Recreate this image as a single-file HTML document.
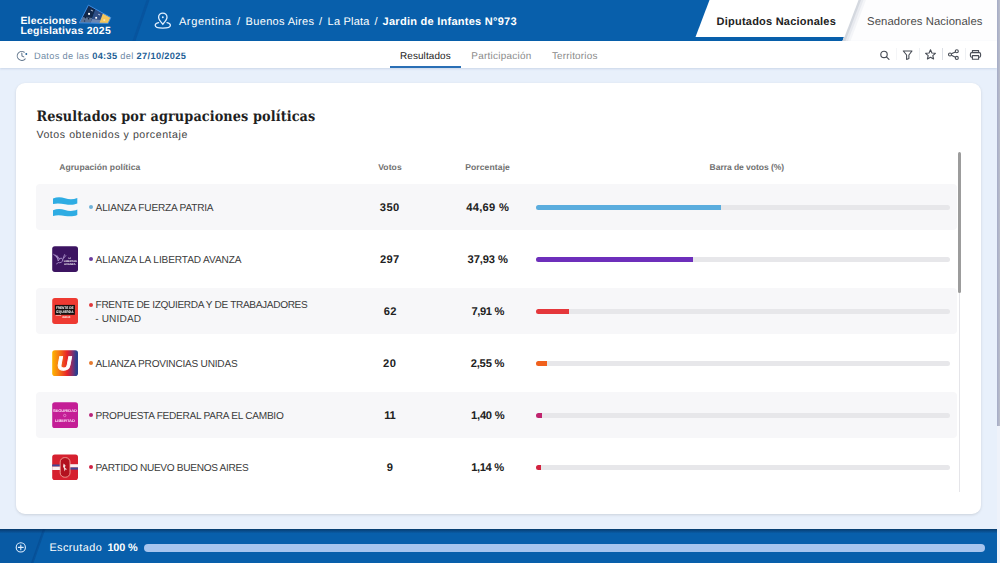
<!DOCTYPE html>
<html lang="es">
<head>
<meta charset="utf-8">
<title>Elecciones Legislativas 2025</title>
<style>
*{box-sizing:border-box;margin:0;padding:0}
html,body{width:1000px;height:563px;overflow:hidden}
body{background:#e8f0fb;font-family:"Liberation Sans",sans-serif;position:relative;color:#333;text-rendering:geometricPrecision}
.abs{position:absolute;white-space:nowrap;line-height:1}
#dt b{color:#1f5f96}
#hdr{position:absolute;left:0;top:0;width:997px;height:41px;background:#085fab}
#sub{position:absolute;left:0;top:41px;width:997px;height:27px;background:#fff;box-shadow:0 1px 2px rgba(70,100,150,.18)}
#tabA{position:absolute;left:0;top:0;width:1000px;height:45px}
#card{position:absolute;left:16px;top:83px;width:965px;height:431px;background:#fff;border-radius:9px;box-shadow:0 1px 3px rgba(0,0,0,.13)}
#foot{position:absolute;left:0;top:529px;width:997px;height:34px;background:linear-gradient(180deg,#083c6c 0,#094c8b 2px,#085fab 4.5px)}
.row{position:absolute;left:36px;width:921px;height:46px;background:#f7f7f9;border-radius:4px}
.logo{position:absolute;left:52px;width:26px;height:26px;will-change:transform}
.dot{position:absolute;left:88.75px;width:4.5px;height:4.5px;border-radius:50%}
.bar{position:absolute;left:536px;width:414px;height:5px;background:#e7e7ea;border-radius:2.5px;overflow:hidden}
.bar i{display:block;height:5px}
.ico{position:absolute;overflow:visible}
.sep{position:absolute;top:48px;width:1px;height:12px;background:#e3e5ea}
</style>
</head>
<body>
<div id="hdr"></div>
<svg id="tabA" viewBox="0 0 1000 45">
  <defs>
    <linearGradient id="sl" x1="0" x2="1"><stop offset="0" stop-color="#0a5aa6"/><stop offset="1" stop-color="#0a5aa6"/></linearGradient>
  </defs>
  <polygon points="0,0 147,0 133,41 0,41" fill="#075ba6"/>
  <polygon points="146.5,0 149.5,0 135.5,41 132.5,41" fill="#07549e"/>
  <polygon points="859,0 997,0 997,41 843,41" fill="#fdfdfe"/>
  <polygon points="858,0 866,0 850.5,41 842.5,41" fill="#f4f5f8"/>
  <polygon points="858,0 863.5,0 848,41 842.5,41" fill="#e8eaef"/>
  <polygon points="858,0 861,0 845.5,41 842.5,41" fill="#d4d8df"/>
  <polygon points="709.5,0 858.5,0 844.5,37 695.5,37" fill="#fff"/>
  <rect x="846" y="41" width="151" height="1" fill="#eceef2"/>
</svg>
<!-- ballot logo -->
<svg class="ico" style="left:76px;top:2px" width="40" height="26" viewBox="76 2 40 26">
  <polygon points="88.4,5.1 95.6,9.1 90.4,23.1 79.3,22.9" fill="#12284b"/>
  <polygon points="82.6,17 92.4,18 90.4,23.1 79.3,22.9" fill="#5b7396"/>
  <circle cx="85.4" cy="17.6" r=".8" fill="#0d1c36"/><circle cx="88.6" cy="18.8" r=".8" fill="#0d1c36"/><circle cx="84.6" cy="21" r=".7" fill="#22375c"/>
  <polygon points="95.6,9.1 103,13.3 99.2,23.2 90.4,23.1" fill="#2f4d84"/>
  <polygon points="92.2,19 100.4,20 99.2,23.2 90.4,23.1" fill="#6d88b3"/>
  <polygon points="103,13.3 110.8,17.6 108.1,23.4 99.2,23.2" fill="#f3c65c"/>
  <polygon points="88.4,5.1 110.8,17.6 108.1,23.4 79.3,22.9" fill="none" stroke="#3d8ce2" stroke-width="1" stroke-linejoin="round"/>
  <rect x="88.1" y="12.9" width="1.9" height="1.9" fill="#fff"/>
  <rect x="95.3" y="16.9" width="1.8" height="1.8" fill="#fff"/>
  <rect x="91" y="9.6" width="2.4" height=".7" fill="#c9d3e6" transform="rotate(29 91 9.6)"/>
  <rect x="98.4" y="13.8" width="2.2" height=".7" fill="#c9d3e6" transform="rotate(29 98.4 13.8)"/>
  <rect x="103.4" y="19.2" width="1.8" height="1.8" fill="#fbe3a6"/>
</svg>
<!-- location icon -->
<svg class="ico" style="left:153px;top:11px" width="20" height="19" viewBox="0 0 20 19" fill="none" stroke="#e3f0ff" stroke-width="1.3" stroke-linecap="round">
  <path d="M9.8 13.2 C7.4 10.6 5.6 8.6 5.6 6.3 A4.2 4.2 0 0 1 14 6.3 C14 8.6 12.2 10.6 9.8 13.2 Z"/>
  <circle cx="9.8" cy="6.3" r=".95" fill="#e3f0ff" stroke="none"/>
  <path d="M5.6 11.7 C3.4 12.2 2.2 13.2 2.2 14.3 C2.2 16 5.6 17.2 9.8 17.2 C14 17.2 17.4 16 17.4 14.3 C17.4 13.2 16.2 12.2 14 11.7"/>
</svg>

<div id="sub"></div>
<!-- clock icon -->
<svg class="ico" style="left:16px;top:50px" width="12" height="12" viewBox="0 0 12 12" fill="none" stroke="#64788e" stroke-width="1.05" stroke-linecap="round" stroke-linejoin="round">
  <path d="M8.3 2.2 A4.5 4.5 0 1 0 9.2 8.8"/>
  <path d="M5.8 3.1 L6 6 L7.8 6.9"/>
  <circle cx="10.3" cy="4" r=".95" fill="#1f5f96" stroke="none"/>
</svg>
<div style="position:absolute;left:390px;top:66px;width:71px;height:2px;background:#2a6fb5"></div>
<!-- toolbar icons -->
<svg class="ico" style="left:879px;top:49px" width="12" height="12" viewBox="0 0 12 12" fill="none" stroke="#474c55" stroke-width="1.15" stroke-linecap="round">
  <circle cx="5" cy="5.4" r="3.2"/><path d="M7.4 7.8 L10 10.3"/>
</svg>
<svg class="ico" style="left:902px;top:49px" width="12" height="12" viewBox="0 0 12 12" fill="none" stroke="#474c55" stroke-width="1.1" stroke-linejoin="round">
  <path d="M1.3 2 H10 L6.9 6 V9.4 L4.6 10.4 V6 Z"/>
</svg>
<svg class="ico" style="left:924px;top:48px" width="13" height="13" viewBox="0 0 13 13" fill="none" stroke="#474c55" stroke-width="1.1" stroke-linejoin="round">
  <path d="M6.5 1.8 L7.9 5 L11.4 5.3 L8.8 7.6 L9.6 11 L6.5 9.2 L3.4 11 L4.2 7.6 L1.6 5.3 L5.1 5 Z"/>
</svg>
<svg class="ico" style="left:947px;top:48px" width="13" height="13" viewBox="0 0 13 13" fill="none" stroke="#474c55" stroke-width="1.1">
  <circle cx="3" cy="6.5" r="1.5"/><circle cx="9.8" cy="3.3" r="1.5"/><circle cx="9.8" cy="9.9" r="1.5"/>
  <path d="M4.4 5.8 L8.4 3.9 M4.4 7.2 L8.4 9.2"/>
</svg>
<svg class="ico" style="left:969px;top:49px" width="13" height="12" viewBox="0 0 13 12" fill="none" stroke="#474c55" stroke-width="1.1" stroke-linejoin="round">
  <path d="M3.4 3.6 V1.6 H9.6 V3.6"/>
  <rect x="1.4" y="3.6" width="10.2" height="4.6" rx="1.4"/>
  <rect x="3.4" y="6.6" width="6.2" height="3.6" fill="#fff"/>
</svg>
<div class="sep" style="left:896px;background:#f4f5f7"></div>
<div class="sep" style="left:919px;background:#eef0f3"></div>
<div class="sep" style="left:941.5px;background:#dcdfe5"></div>
<div class="sep" style="left:964.5px;background:#eef0f3"></div>

<div id="card"></div>
<div class="row" style="top:184px"></div>
<div class="row" style="top:288px"></div>
<div class="row" style="top:392px"></div>

<svg class="logo" style="top:194px" viewBox="0 0 26 26">
  <path d="M1 4.5 C5 2.7 9 2.9 13 4.2 S21 5.7 25.3 3.9 L25.3 9.6 C21 11.4 17 10.9 13 10.2 S5 9 1 10 Z" fill="#2eace3"/>
  <path d="M1 16.2 C5 14.4 9 14.6 13 15.9 S21 17.4 25.3 15.5 L25.3 21 C21 22.8 17 22.5 13 21.9 S5 20.9 1 22 Z" fill="#2eace3"/>
</svg>
<svg class="logo" style="top:246px" viewBox="0 0 26 26">
  <rect x=".2" y=".2" width="25.8" height="25.7" rx="2.6" fill="#3c1461"/>
  <g fill="none" stroke="#c9b3e6" stroke-width=".7" stroke-linecap="round">
    <path d="M1.6 8.4 L5 11.2 L6.2 14.6 M3.2 8.8 L6 12.4 M5 9.6 L7.4 13"/>
    <path d="M6.2 14.6 C7.2 11.6 10.6 11.4 10.8 13.8 C11 16 8 17.2 6.4 16.6 L4.6 17.8"/>
    <path d="M10.8 13.2 L13.8 9.6 M11.4 11.6 L12.6 8.6"/>
  </g>
  <g font-family="'Liberation Sans',sans-serif" font-weight="bold" fill="#fff" font-size="2.7">
    <text x="16.4" y="13" textLength="2.6" lengthAdjust="spacingAndGlyphs">LA</text>
    <text x="11.8" y="15.9" textLength="13.2" lengthAdjust="spacingAndGlyphs">LIBERTAD</text>
    <text x="12.1" y="18.8" textLength="11.6" lengthAdjust="spacingAndGlyphs">AVANZA</text>
  </g>
</svg>
<svg class="logo" style="top:298px" viewBox="0 0 26 26">
  <rect x=".2" y=".1" width="25.8" height="25.8" rx="2.6" fill="#ee3a32"/>
  <rect x="2.9" y="6.9" width="20" height="9.9" fill="#141010"/>
  <g font-family="'Liberation Sans',sans-serif" font-weight="bold" fill="#fff">
    <text x="3.9" y="11.1" font-size="3.6" textLength="17.6" lengthAdjust="spacingAndGlyphs">FRENTE DE</text>
    <text x="3.9" y="14.9" font-size="3.6" textLength="17.6" lengthAdjust="spacingAndGlyphs">IZQUIERDA</text>
    <text x="9.9" y="19.9" font-size="2.4" textLength="8.4" lengthAdjust="spacingAndGlyphs">UNIDAD</text>
  </g>
  <rect x="3.7" y="17.2" width="5.4" height=".6" fill="#fbd9d6"/>
</svg>
<svg class="logo" style="top:350px" viewBox="0 0 26 26">
  <defs><linearGradient id="pu" x1="0" x2="1" y1="0" y2="0">
    <stop offset="0" stop-color="#fdb500"/><stop offset=".25" stop-color="#f67d12"/><stop offset=".58" stop-color="#e72229"/><stop offset=".8" stop-color="#7b2f72"/><stop offset=".93" stop-color="#2c3f8d"/><stop offset="1" stop-color="#2c3f8d"/>
  </linearGradient></defs>
  <rect x=".2" y=".2" width="25.8" height="25.8" rx="2.8" fill="url(#pu)"/>
  <text x="4.9" y="19.9" font-family="'Liberation Sans',sans-serif" font-weight="bold" font-style="italic" font-size="19.8" fill="#fff" stroke="#fff" stroke-width=".9" stroke-linejoin="round">U</text>
</svg>
<svg class="logo" style="top:402px" viewBox="0 0 26 26">
  <rect x=".2" y=".2" width="25.8" height="25.8" rx="2.6" fill="#c41e96"/>
  <g font-family="'Liberation Sans',sans-serif" font-weight="bold" fill="#fde6f6" font-size="3.8">
    <text x=".9" y="9.6" textLength="24.1" lengthAdjust="spacingAndGlyphs">SEGURIDAD</text>
    <text x="2.9" y="19.9" textLength="20" lengthAdjust="spacingAndGlyphs">LIBERTAD</text>
  </g>
  <circle cx="12.7" cy="13.5" r="1.2" fill="none" stroke="#f3a9dd" stroke-width=".6"/>
</svg>
<svg class="logo" style="top:454px" viewBox="0 0 26 26">
  <rect x=".2" y=".4" width="25.8" height="25.8" rx="2.6" fill="#d6202f"/>
  <rect x=".2" y="10.5" width="8.5" height="2.1" fill="#3f4596"/>
  <rect x=".2" y="12.6" width="8.5" height="3.4" fill="#fbeff0"/>
  <rect x="17.5" y="10.2" width="8.5" height="3.3" fill="#fbeff0"/>
  <rect x="17.5" y="13.5" width="8.5" height="2.1" fill="#3f4596"/>
  <rect x="8.2" y="3.6" width="9.8" height="19.6" rx="4.4" fill="#b3121f" stroke="#f5b9aa" stroke-width=".8"/>
  <path d="M11.6 9.6 L13.6 11.4 L12.8 13.4 L15.2 15.6 L13.4 15.4 L12.6 17.4 L12 14.6 L11 12.6 Z" fill="#f6dedd"/>
</svg>


<div class="dot" style="top:204.75px;background:#6fb1d8"></div>
<div class="dot" style="top:256.75px;background:#6b3fa0"></div>
<div class="dot" style="top:302.75px;background:#e0383c"></div>
<div class="dot" style="top:360.75px;background:#e67a2e"></div>
<div class="dot" style="top:412.75px;background:#b8237a"></div>
<div class="dot" style="top:464.75px;background:#cf2344"></div>

<div class="bar" style="top:204.5px"><i style="width:185px;background:#5badde"></i></div>
<div class="bar" style="top:256.5px"><i style="width:157px;background:#6d2fbb"></i></div>
<div class="bar" style="top:308.5px"><i style="width:33px;background:#e5373b"></i></div>
<div class="bar" style="top:360.5px"><i style="width:11px;background:#f0601c"></i></div>
<div class="bar" style="top:412.5px"><i style="width:6px;background:#c0256f"></i></div>
<div class="bar" style="top:464.5px"><i style="width:5px;background:#d3233f"></i></div>

<div style="position:absolute;left:959px;top:152px;width:1px;height:340px;background:#e5e5e9"></div>
<div style="position:absolute;left:958px;top:152px;width:3px;height:141px;background:#9c9c9c;border-radius:1.5px"></div>

<div id="foot"></div>
<svg class="ico" style="left:0;top:529px" width="60" height="34" viewBox="0 0 60 34">
  <polygon points="0,0 44,0 32,34 0,34" fill="rgba(6,50,110,.10)"/>
  <polygon points="43,0 45.5,0 33.5,34 31,34" fill="rgba(4,40,100,.22)"/>
  <g fill="none" stroke="#e3f0ff" stroke-width="1.1" stroke-linecap="round"><circle cx="20.8" cy="18.4" r="4.6"/><path d="M20.8 16 V20.8 M18.4 18.4 H23.2"/></g>
</svg>
<div style="position:absolute;left:143.5px;top:543.6px;width:841px;height:8px;border-radius:4px;background:#a8c5ee"></div>

<!-- page scrollbar -->
<div style="position:absolute;left:997px;top:0;width:3px;height:563px;background:#eef2fa"></div>
<div style="position:absolute;left:996.6px;top:0;width:3.4px;height:426px;background:linear-gradient(90deg,#a4abc6,#bcbfcb)"></div>

<div class="abs" id="lg1" style="left:20.40px;top:17.05px;font-size:10.40px;color:#ffffff;letter-spacing:0.230px;font-weight:bold;">Elecciones</div>
<div class="abs" id="lg2" style="left:20.40px;top:27.05px;font-size:10.40px;color:#ffffff;letter-spacing:0.300px;font-weight:bold;">Legislativas 2025</div>
<div class="abs" id="bc1" style="left:178.90px;top:17.05px;font-size:11.03px;color:#ffffff;letter-spacing:0.616px;">Argentina</div>
<div class="abs" id="s1" style="left:237.12px;top:17.05px;font-size:11.03px;color:#ffffff;letter-spacing:0.000px;">/</div>
<div class="abs" id="bc2" style="left:245.60px;top:17.05px;font-size:11.03px;color:#ffffff;letter-spacing:0.323px;">Buenos Aires</div>
<div class="abs" id="s2" style="left:319.02px;top:17.05px;font-size:11.03px;color:#ffffff;letter-spacing:0.000px;">/</div>
<div class="abs" id="bc3" style="left:327.60px;top:17.05px;font-size:11.03px;color:#ffffff;letter-spacing:0.197px;">La Plata</div>
<div class="abs" id="s3" style="left:374.52px;top:17.05px;font-size:11.03px;color:#ffffff;letter-spacing:0.000px;">/</div>
<div class="abs" id="bc4" style="left:382.60px;top:17.05px;font-size:11.03px;color:#ffffff;letter-spacing:0.255px;font-weight:bold;">Jardin de Infantes N°973</div>
<div class="abs" id="t1" style="left:716.60px;top:17.05px;font-size:11.03px;color:#222;letter-spacing:0.216px;font-weight:bold;">Diputados Nacionales</div>
<div class="abs" id="t2" style="left:867.10px;top:17.05px;font-size:11.31px;color:#4a4a4a;letter-spacing:0.086px;">Senadores Nacionales</div>
<div class="abs" id="dt" style="left:33.90px;top:52.05px;font-size:9.22px;color:#6f8aa5;letter-spacing:0.343px;">Datos de las <b>04:35</b> del <b>27/10/2025</b></div>
<div class="abs" id="n1" style="left:400.00px;top:52.05px;font-size:9.92px;color:#222;letter-spacing:0.114px;">Resultados</div>
<div class="abs" id="n2" style="left:471.30px;top:52.05px;font-size:9.92px;color:#8a8a8a;letter-spacing:0.275px;">Participación</div>
<div class="abs" id="n3" style="left:551.90px;top:52.05px;font-size:9.92px;color:#8a8a8a;letter-spacing:0.201px;">Territorios</div>
<div class="abs" id="h1" style="left:36.40px;top:110.05px;font-size:14.30px;color:#1f1f1f;letter-spacing:0.090px;font-weight:bold;font-family:'DejaVu Serif Condensed','DejaVu Serif','Liberation Serif',serif;">Resultados por agrupaciones políticas</div>
<div class="abs" id="h2" style="left:36.40px;top:130.05px;font-size:10.61px;color:#444;letter-spacing:0.545px;">Votos obtenidos y porcentaje</div>
<div class="abs" id="th1" style="left:59.20px;top:163.05px;font-size:8.52px;color:#707070;letter-spacing:0.089px;font-weight:bold;">Agrupación política</div>
<div class="abs" id="th2" style="left:378.20px;top:163.05px;font-size:8.52px;color:#707070;letter-spacing:0.114px;font-weight:bold;">Votos</div>
<div class="abs" id="th3" style="left:465.20px;top:163.05px;font-size:8.52px;color:#707070;letter-spacing:0.125px;font-weight:bold;">Porcentaje</div>
<div class="abs" id="th4" style="left:709.60px;top:163.05px;font-size:8.52px;color:#707070;letter-spacing:-0.047px;font-weight:bold;">Barra de votos (%)</div>
<div class="abs" id="nm1" style="left:95.60px;top:204.05px;font-size:10.10px;color:#3c3c3c;letter-spacing:-0.196px;">ALIANZA FUERZA PATRIA</div>
<div class="abs" id="v1" style="left:379.80px;top:203.05px;font-size:11.17px;color:#222;letter-spacing:0.425px;font-weight:bold;">350</div>
<div class="abs" id="p1" style="left:466.30px;top:203.05px;font-size:11.17px;color:#222;letter-spacing:0.266px;font-weight:bold;">44,69 %</div>
<div class="abs" id="nm2" style="left:95.60px;top:256.05px;font-size:10.10px;color:#3c3c3c;letter-spacing:-0.103px;">ALIANZA LA LIBERTAD AVANZA</div>
<div class="abs" id="v2" style="left:380.00px;top:255.05px;font-size:11.17px;color:#222;letter-spacing:0.292px;font-weight:bold;">297</div>
<div class="abs" id="p2" style="left:467.60px;top:255.05px;font-size:11.17px;color:#222;letter-spacing:-0.120px;font-weight:bold;">37,93 %</div>
<div class="abs" id="nm3a" style="left:95.60px;top:301.05px;font-size:10.10px;color:#3c3c3c;letter-spacing:-0.339px;">FRENTE DE IZQUIERDA Y DE TRABAJADORES</div>
<div class="abs" id="nm3b" style="left:95.20px;top:315.05px;font-size:10.10px;color:#3c3c3c;letter-spacing:0.153px;">- UNIDAD</div>
<div class="abs" id="v3" style="left:383.70px;top:307.05px;font-size:11.17px;color:#222;letter-spacing:0.439px;font-weight:bold;">62</div>
<div class="abs" id="p3" style="left:471.38px;top:307.05px;font-size:11.17px;color:#222;letter-spacing:-0.350px;font-weight:bold;">7,91 %</div>
<div class="abs" id="nm4" style="left:95.60px;top:360.05px;font-size:10.10px;color:#3c3c3c;letter-spacing:-0.229px;">ALIANZA PROVINCIAS UNIDAS</div>
<div class="abs" id="v4" style="left:383.00px;top:359.05px;font-size:11.17px;color:#222;letter-spacing:0.539px;font-weight:bold;">20</div>
<div class="abs" id="p4" style="left:470.70px;top:359.05px;font-size:11.17px;color:#222;letter-spacing:-0.189px;font-weight:bold;">2,55 %</div>
<div class="abs" id="nm5" style="left:95.60px;top:412.05px;font-size:10.10px;color:#3c3c3c;letter-spacing:-0.263px;">PROPUESTA FEDERAL PARA EL CAMBIO</div>
<div class="abs" id="v5" style="left:384.30px;top:411.05px;font-size:11.17px;color:#222;letter-spacing:-0.350px;font-weight:bold;">11</div>
<div class="abs" id="p5" style="left:471.10px;top:411.05px;font-size:11.17px;color:#222;letter-spacing:-0.256px;font-weight:bold;">1,40 %</div>
<div class="abs" id="nm6" style="left:95.60px;top:464.05px;font-size:10.10px;color:#3c3c3c;letter-spacing:-0.300px;">PARTIDO NUEVO BUENOS AIRES</div>
<div class="abs" id="v6" style="left:386.84px;top:463.05px;font-size:11.17px;color:#222;letter-spacing:0.000px;font-weight:bold;">9</div>
<div class="abs" id="p6" style="left:471.13px;top:463.05px;font-size:11.17px;color:#222;letter-spacing:-0.350px;font-weight:bold;">1,14 %</div>
<div class="abs" id="f1" style="left:49.40px;top:543.05px;font-size:10.89px;color:#ffffff;letter-spacing:0.426px;">Escrutado</div>
<div class="abs" id="f2" style="left:107.40px;top:543.05px;font-size:10.89px;color:#ffffff;letter-spacing:-0.129px;font-weight:bold;">100 %</div>
</body>
</html>
